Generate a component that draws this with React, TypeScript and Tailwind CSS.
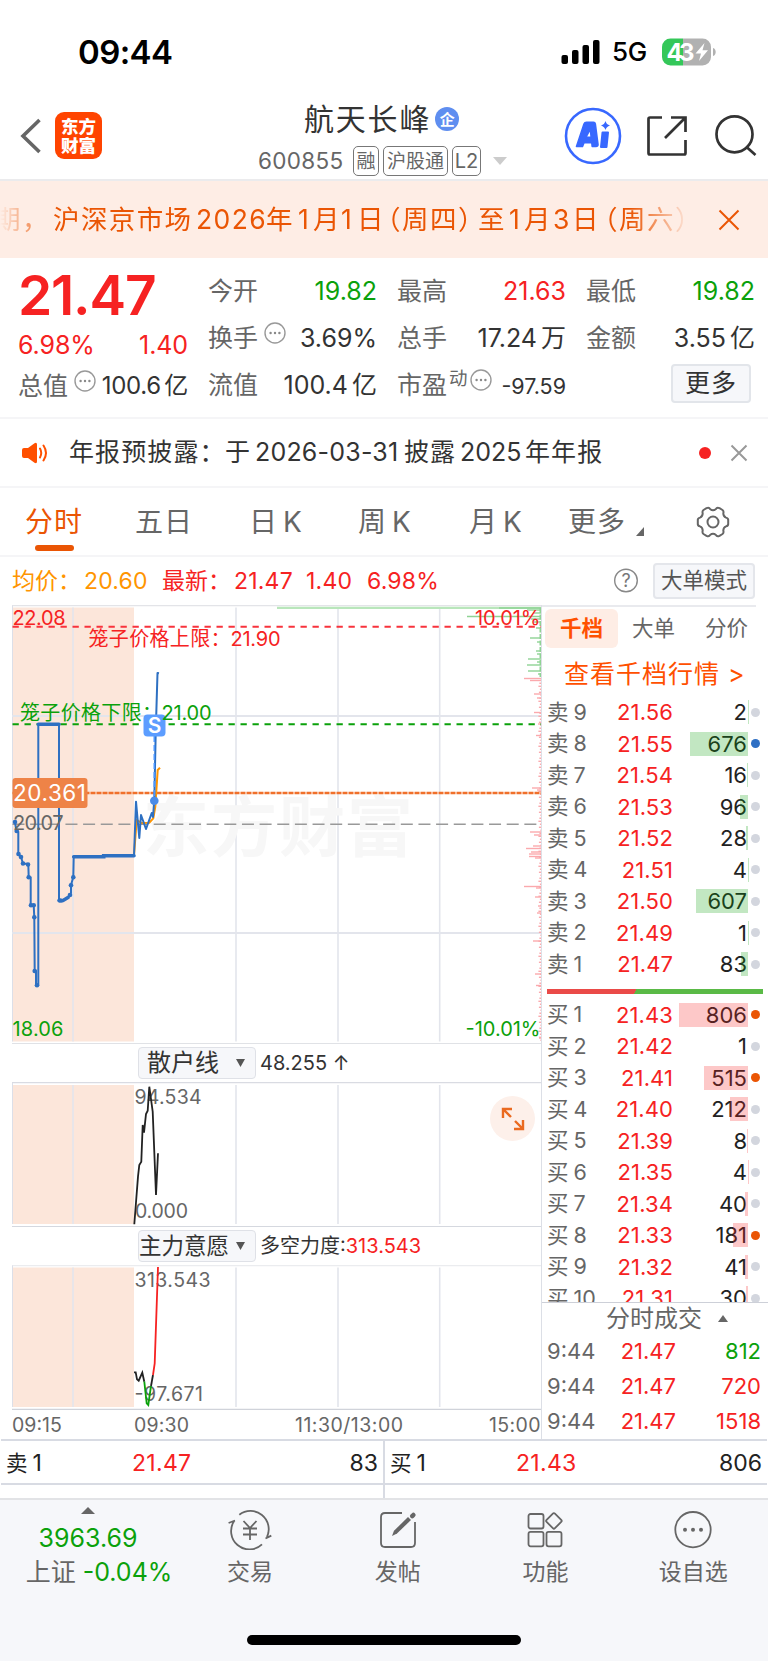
import type { ReactNode } from 'react';

type Level = { label: string; price: string; qty: string; bar: number; dot?: string };

const BANNER = [
  { t: '期，', w: 'w-[59px]' },
  { t: '沪深京市场', w: 'w-[143px]' },
  { t: '2026', w: 'w-[70px]' },
  { t: '年', w: 'w-[32px]' },
  { t: '1', w: 'w-[15px]' },
  { t: '月', w: 'w-[28px]' },
  { t: '1', w: 'w-[16px]' },
  { t: '日', w: 'w-[26px]' },
  { t: '（', w: 'w-[19px] justify-end' },
  { t: '周四', w: 'w-[56px]' },
  { t: '）', w: 'w-[20px]' },
  { t: '至', w: 'w-[31px]' },
  { t: '1', w: 'w-[15px]' },
  { t: '月', w: 'w-[29px]' },
  { t: '3', w: 'w-[19px]' },
  { t: '日', w: 'w-[27px]' },
  { t: '（', w: 'w-[20px] justify-end' },
  { t: '周六', w: 'w-[56px]' },
  { t: '）', w: 'w-[20px]' },
];

const ASKS: Level[] = [
  { label: '卖9', price: '21.56', qty: '2', bar: 0.5 },
  { label: '卖8', price: '21.55', qty: '676', bar: 58, dot: 'bg-[#2e6fc4]' },
  { label: '卖7', price: '21.54', qty: '16', bar: 1 },
  { label: '卖6', price: '21.53', qty: '96', bar: 8 },
  { label: '卖5', price: '21.52', qty: '28', bar: 2 },
  { label: '卖4', price: '21.51', qty: '4', bar: 0.5 },
  { label: '卖3', price: '21.50', qty: '607', bar: 52 },
  { label: '卖2', price: '21.49', qty: '1', bar: 0.3 },
  { label: '卖1', price: '21.47', qty: '83', bar: 7 },
];

const BIDS: Level[] = [
  { label: '买1', price: '21.43', qty: '806', bar: 69, dot: 'bg-[#ea5504]' },
  { label: '买2', price: '21.42', qty: '1', bar: 0 },
  { label: '买3', price: '21.41', qty: '515', bar: 44, dot: 'bg-[#ea5504]' },
  { label: '买4', price: '21.40', qty: '212', bar: 18 },
  { label: '买5', price: '21.39', qty: '8', bar: 0.7 },
  { label: '买6', price: '21.35', qty: '4', bar: 0.5 },
  { label: '买7', price: '21.34', qty: '40', bar: 3 },
  { label: '买8', price: '21.33', qty: '181', bar: 15, dot: 'bg-[#ea5504]' },
  { label: '买9', price: '21.32', qty: '41', bar: 3 },
  { label: '买10', price: '21.31', qty: '30', bar: 2 },
];

const TRADES = [
  { qty: '812', color: 'text-[#0ba10b]' },
  { qty: '720', color: 'text-[#f62222]' },
  { qty: '1518', color: 'text-[#f62222]' },
];

// [y, length] of the longest price-distribution bars
const SELL_BARS = [
  [608, 42], [610, 14], [613, 8], [616.5, 74], [619, 10], [622, 7], [628, 5], [638, 11], [642, 4],
  [651, 5], [654, 4], [659, 13], [662, 4], [665, 14], [671, 13], [674, 3],
];
const BUY_BARS = [
  [678.5, 17], [680.5, 11], [694, 7], [698, 4], [712.5, 7], [724, 3], [735.5, 5], [788, 9], [790, 4],
  [832, 11], [835, 7], [846, 8], [848.5, 15], [852, 10], [854, 12], [856.5, 12], [858, 6], [886.5, 17],
  [888, 5], [897, 6], [906, 3], [913, 4], [941, 8], [974, 6], [985.5, 5], [1038, 2],
];
const TICKS = Array.from({ length: 121 }, (_, i) => [680.3 + i * 3, 0.6 + ((i * 7) % 5) * 0.5]);

const PRICE_DOTS = [
  [15, 822], [16.7, 831], [18.5, 854], [21, 857], [23, 863.5], [28, 864.5], [28.7, 877.3], [31, 905.3],
  [33.7, 905.3], [34.3, 917.3], [34.7, 971], [37, 985.3], [60, 900.5], [70, 895], [71, 885.3], [73.3, 877.3],
];

const GRID_X = [73, 236, 338, 439.7];

function Dots({ size }: { size: number }) {
  return (
    <svg width={size} height={size} viewBox="0 0 22 22" className="shrink-0">
      <circle cx="11" cy="11" r="10" fill="none" stroke="#999" strokeWidth="1.4" />
      <circle cx="6.6" cy="11" r="1.2" fill="#888" />
      <circle cx="11" cy="11" r="1.2" fill="#888" />
      <circle cx="15.4" cy="11" r="1.2" fill="#888" />
    </svg>
  );
}

function Cell({ label, value, color = 'text-[#333]', extra }: {
  label: string; value: string; color?: string; extra?: ReactNode;
}) {
  return (
    <div className="flex h-[47px] items-center justify-between whitespace-nowrap">
      <span className="flex items-center text-[25px] text-[#666]">{label}{extra}</span>
      <span className={`text-[25px] [word-spacing:-3px] ${color}`}>{value}</span>
    </div>
  );
}

function Label({ x, y, w, size = 20, fill, children }: {
  x: number; y: number; w: number; size?: number; fill: string; children: string;
}) {
  return (
    <text x={x} y={y} fontSize={size} fill={fill} textLength={w} lengthAdjust="spacing">{children}</text>
  );
}

function StatusBar() {
  return (
    <div className="flex h-[93px] items-center pl-[78px] pt-[11px]">
      <span className="w-[483px] text-[33px] font-semibold tracking-[-0.6px] text-black">09:44</span>
      <svg width="40" height="26" viewBox="0 0 40 26">
        <rect x="0.5" y="16" width="6.5" height="9" rx="2" />
        <rect x="11" y="11" width="6.5" height="14" rx="2" />
        <rect x="21.5" y="6" width="6.5" height="19" rx="2" />
        <rect x="32" y="1" width="6.5" height="24" rx="2" />
      </svg>
      <span className="ml-[11px] w-[50px] text-[26px] font-medium tracking-[-0.2px] text-black">5G</span>
      <svg width="55" height="28" viewBox="0 0 55 28">
        <path d="M8.5 0.5H21V27.5H8.5A8.5 8.5 0 0 1 0 19V9A8.5 8.5 0 0 1 8.5 .5Z" fill="#34c759" />
        <path d="M21 .5H40.5A8.5 8.5 0 0 1 49 9V19A8.5 8.5 0 0 1 40.5 27.5H21Z" fill="#b1b1b1" />
        <path d="M51 10C54.6 11 54.6 17 51 18Z" fill="#b1b1b1" />
        <text x="4.5" y="22.5" fontSize="24" fontWeight="700" fill="#fff" textLength="28">43</text>
        <path d="M42.5 5L33.5 15.5H39L37 23L46 12.3H40.5Z" fill="#fff" />
      </svg>
    </div>
  );
}

function Header() {
  return (
    <div className="flex h-[88px] items-start border-b-2 border-[#ebebed]">
      <svg width="24" height="36" viewBox="0 0 24 36" className="ml-[19px] mt-[25px]">
        <path d="M20.5 2L4 18L20.5 34" fill="none" stroke="#666" strokeWidth="3.6" />
      </svg>
      <div className="ml-3 mt-[19px] flex h-[47px] w-[47px] flex-col items-center justify-center rounded-[9px] bg-[#ff4400] text-[17.5px] font-black leading-[19px] text-white">
        <span>东方</span>
        <span>财富</span>
      </div>
      <div className="ml-[156px] w-[281px]">
        <div className="flex h-[52px] items-center pl-[46px] text-[30px] tracking-[1.8px] text-[#333]">
          航天长峰
          <span className="ml-[4px] flex h-6 w-6 items-center justify-center rounded-full bg-[#5f8ef0] text-[15px] font-bold tracking-normal text-white">企</span>
        </div>
        <div className="flex h-[32px] items-center gap-1 text-[19px] leading-none text-[#666]">
          <span className="w-[91px] text-[22.5px] tracking-[0.3px]">600855</span>
          <span className="flex h-[30px] w-[26px] items-center justify-center rounded-[5px] border border-[#777]">融</span>
          <span className="flex h-[30px] w-[65px] items-center justify-center rounded-[5px] border border-[#777]">沪股通</span>
          <span className="flex h-[30px] w-[29px] items-center justify-center rounded-[5px] border border-[#777] text-[20px]">L2</span>
          <svg width="14" height="8" viewBox="0 0 14 8" className="ml-2">
            <path d="M0 0H14L7 8Z" fill="#ccc" />
          </svg>
        </div>
      </div>
      <svg width="58" height="58" viewBox="0 0 58 58" className="ml-[25px] mt-[14px]">
        <circle cx="29" cy="29" r="27" fill="none" stroke="#3868ff" strokeWidth="2.6" />
        <path d="M12.5 39.5L20 17Q20.6 15.2 22.5 15.2H29.5Q31 15.2 31.3 16.8L34 37.5Q34 39.5 32 39.5H28.2L27.8 35.8H20L18.5 39.5Z M21.8 30.4H27.2L26.3 22Z" fill="#3868ff" fillRule="evenodd" stroke="#3868ff" strokeWidth="1.6" strokeLinejoin="round" />
        <path d="M38.5 25.5H44L42.5 40H37Z" fill="#3868ff" stroke="#3868ff" strokeWidth="2" strokeLinejoin="round" />
        <path d="M41.5 14Q42.3 17.5 46 18.5Q42.3 19.5 41.5 23Q40.5 19.5 37 18.5Q40.5 17.5 41.5 14Z" fill="#3868ff" />
      </svg>
      <svg width="42" height="42" viewBox="0 0 42 42" className="ml-[24px] mt-[22px]" fill="none" stroke="#333" strokeWidth="2.7">
        <path d="M16 2.5H4Q2.5 2.5 2.5 4V38Q2.5 39.5 4 39.5H38Q39.5 39.5 39.5 38V25" />
        <path d="M25 2.5H39.5V17M39.5 2.5L19 23" />
      </svg>
      <svg width="44" height="44" viewBox="0 0 44 44" className="ml-[26px] mt-[20px] shrink-0" fill="none" stroke="#333" strokeWidth="2.7">
        <circle cx="20.5" cy="21.3" r="18" />
        <path d="M32 33.5L41.5 42" />
      </svg>
    </div>
  );
}

function Banner() {
  return (
    <div className="flex h-[77px] items-center bg-[#feede5] text-[#ea5504]">
      <div className="flex h-[60px] w-[700px] items-center overflow-hidden [mask-image:linear-gradient(to_right,transparent,black_54px,black_630px,transparent_690px)]">
        <div className="-ml-[6px] flex">
          {BANNER.map((s, i) => (
            <span key={i} className={`flex shrink-0 whitespace-nowrap text-[26.5px] tracking-[1.4px] ${s.w}`}>{s.t}</span>
          ))}
        </div>
      </div>
      <svg width="22" height="22" viewBox="0 0 22 22" className="ml-[18px]">
        <path d="M1.5 1.5L20.5 20.5M20.5 1.5L1.5 20.5" stroke="#ea5504" strokeWidth="2" />
      </svg>
    </div>
  );
}

function Quote() {
  return (
    <div className="flex h-[161px] gap-5 border-b-2 border-[#f5f5f7] pl-[18px] pr-[13px] pt-[10px]">
      <div className="w-[170px]">
        <div className="flex h-[54px] items-center text-[55px] font-semibold tracking-[-1.2px] text-[#f62222]">21.47</div>
        <div className="flex h-[47px] items-center justify-between text-[25px] tracking-[-0.1px] text-[#f62222]">
          <span>6.98%</span>
          <span>1.40</span>
        </div>
        <div className="flex h-[34px] items-center whitespace-nowrap text-[25px] text-[#666]">
          总值
          <span className="mb-[11px] ml-[6px] flex"><Dots size={22} /></span>
          <span className="ml-auto text-[24px] tracking-[-0.3px] text-[#333] [word-spacing:-3px]">100.6 亿</span>
        </div>
      </div>
      <div className="w-[169px]">
        <Cell label="今开" value="19.82" color="text-[#0ba10b]" />
        <Cell label="换手" value="3.69%" extra={<span className="mb-[11px] ml-[6px] flex"><Dots size={22} /></span>} />
        <Cell label="流值" value="100.4 亿" />
      </div>
      <div className="w-[169px]">
        <Cell label="最高" value="21.63" color="text-[#f62222]" />
        <Cell label="总手" value="17.24 万" />
        <div className="flex h-[47px] items-center whitespace-nowrap text-[25px] text-[#666]">
          市盈
          <span className="mb-[14px] ml-[2px] text-[18.5px]">动</span>
          <span className="mb-[11px] ml-[2px] flex"><Dots size={22} /></span>
          <span className="ml-auto mt-[3px] text-[21.5px] text-[#333]">-97.59</span>
        </div>
      </div>
      <div className="w-[169px]">
        <Cell label="最低" value="19.82" color="text-[#0ba10b]" />
        <Cell label="金额" value="3.55 亿" />
        <div className="mr-1 mt-[2px] flex justify-end">
          <button className="h-[39px] w-[80px] rounded-[4px] border-2 border-[#e2e5ea] bg-[#f6f7fa] text-[25px] leading-none tracking-[1px] text-[#333]">更多</button>
        </div>
      </div>
    </div>
  );
}

function Notice() {
  return (
    <div className="flex h-[69px] items-center border-b-2 border-[#f5f5f7] pl-[22px]">
      <svg width="26" height="22" viewBox="0 0 26 22">
        <path d="M2 6H6L12.5 1.2Q15 0 15 2.5V19.5Q15 22 12.5 20.8L6 16H2Q0 16 0 14V8Q0 6 2 6Z" fill="#ff5000" />
        <path d="M18 6.5Q20.5 11 18 15.5M21.5 3.5Q26.5 11 21.5 18.5" fill="none" stroke="#ff5000" strokeWidth="2" strokeLinecap="round" />
      </svg>
      <div className="ml-[21px] flex w-[630px] whitespace-nowrap text-[25px] tracking-[1.1px] text-[#333]">
        <span className="w-[156px]">年报预披露：</span>
        <span className="w-[30px]">于</span>
        <span className="w-[149px] tracking-[0.2px]">2026-03-31</span>
        <span className="w-[56px]">披露</span>
        <span className="w-[65px] tracking-normal">2025</span>
        <span>年年报</span>
      </div>
      <span className="h-3 w-3 rounded-full bg-[#f62222]" />
      <svg width="18" height="18" viewBox="0 0 18 18" className="ml-[19px]">
        <path d="M1.5 1.5L16.5 16.5M16.5 1.5L1.5 16.5" stroke="#999" strokeWidth="2" />
      </svg>
    </div>
  );
}

function Tabs() {
  return (
    <div className="relative flex h-[69px] items-center whitespace-nowrap border-b-2 border-[#f5f5f7] pl-[25px] text-[28px] tracking-[1px] text-[#666] [word-spacing:-4px]">
      <span className="w-[110px] text-[#ea5504]">分时</span>
      <span className="w-[114px]">五日</span>
      <span className="w-[109px]">日 K</span>
      <span className="w-[111px]">周 K</span>
      <span className="w-[99px]">月 K</span>
      <span className="w-[68px]">更多</span>
      <svg width="8" height="9" viewBox="0 0 8 9" className="mt-5"><path d="M8 0V9H0Z" fill="#666" /></svg>
      <svg width="34" height="32" viewBox="0 0 34 32" className="ml-[52px]" fill="none" stroke="#666" strokeWidth="2" strokeLinejoin="round">
        <circle cx="17" cy="16" r="5.5" />
        <path d="M10.5 2.2Q13 1 14.3 3.2Q17 5.3 19.7 3.2Q21 1 23.5 2.2L26.5 4Q28 5.2 27.3 7.3Q27.3 10.6 30 11.6Q32.3 12.2 32.2 14V18Q32.3 19.8 30 20.4Q27.3 21.4 27.3 24.7Q28 26.8 26.5 28L23.5 29.8Q21 31 19.7 28.8Q17 26.7 14.3 28.8Q13 31 10.5 29.8L7.5 28Q6 26.8 6.7 24.7Q6.7 21.4 4 20.4Q1.7 19.8 1.8 18V14Q1.7 12.2 4 11.6Q6.7 10.6 6.7 7.3Q6 5.2 7.5 4Z" />
      </svg>
      <span className="absolute bottom-[4px] left-[35px] h-[6px] w-[39px] rounded-full bg-[#ea5504]" />
    </div>
  );
}

function PriceLine() {
  return (
    <div className="flex h-[48px] items-center whitespace-nowrap pl-[12px] text-[23px] text-[#f62222]">
      <span className="w-[72px] text-[#ff9500]">均价：</span>
      <span className="w-[78px] tracking-[0.2px] text-[#ff9500]">20.60</span>
      <span className="w-[72px]">最新：</span>
      <span className="w-[72px] tracking-[0.2px]">21.47</span>
      <span className="w-[61px] tracking-[0.2px]">1.40</span>
      <span className="w-[246px] tracking-[0.2px]">6.98%</span>
      <svg width="26" height="26" viewBox="0 0 26 26">
        <circle cx="13" cy="12.5" r="11.3" fill="none" stroke="#888" strokeWidth="1.4" />
        <text x="13" y="18.8" fontSize="18" textAnchor="middle" fill="#777">?</text>
      </svg>
      <span className="ml-[14px] flex h-[36px] w-[102px] items-center justify-center rounded-[4px] border-2 border-[#e4e6eb] bg-[#f6f7fa] text-[21.5px] text-[#555]">大单模式</span>
    </div>
  );
}

function Grid({ top, bottom }: { top: number; bottom: number }) {
  return (
    <>
      <rect x="12.5" y={top} width="121.5" height={bottom - top} fill="#fce6da" />
      {GRID_X.map((x) => (
        <line key={x} x1={x} x2={x} y1={top} y2={bottom} stroke="#e3e5ec" strokeWidth="1.6" />
      ))}
      <line x1="12.5" x2="12.5" y1={top - 2} y2={bottom} stroke="#dcdfe8" />
    </>
  );
}

function MainChart() {
  return (
    <svg width="541" height="439" viewBox="0 605 541 439" className="block">
      <line x1="12" x2="541" y1="605.5" y2="605.5" stroke="#e3e4e8" strokeWidth="1.5" />
      <Grid top={607.5} bottom={1041.5} />
      <line x1="12" x2="541" y1="716" y2="716" stroke="#e3e5ec" strokeWidth="2" />
      <line x1="12" x2="541" y1="933" y2="933" stroke="#e3e5ec" strokeWidth="2" />
      <text x="143" y="851" fontSize="66" fontWeight="700" fill="#f7f7f7" textLength="270">东方财富</text>
      <line x1="277" x2="541" y1="607.8" y2="607.8" stroke="#b9e6bb" strokeWidth="2.2" />
      {SELL_BARS.map(([y, w]) => <line key={y} x1={541 - w} x2="541" y1={y} y2={y} stroke="#8fd394" strokeWidth="1.4" />)}
      <path d="M540.3 608V677" stroke="#8fd394" strokeWidth="1.6" strokeDasharray="5 1.5" />
      {BUY_BARS.map(([y, w]) => <line key={y} x1={541 - w} x2="541" y1={y} y2={y} stroke="#fba9ad" strokeWidth="1.4" />)}
      {TICKS.map(([y, w]) => <line key={y} x1={541 - w} x2="541" y1={y} y2={y} stroke="#fba9ad" strokeWidth="1.4" />)}

      <line x1="12.5" x2="541" y1="626.7" y2="626.7" stroke="#f8333c" strokeWidth="2" strokeDasharray="6.3 5.7" />
      <line x1="12.5" x2="541" y1="724.2" y2="724.2" stroke="#0ba10b" strokeWidth="2" strokeDasharray="6.3 5.7" />
      <line x1="12.5" x2="541" y1="793" y2="793" stroke="#f0702b" strokeWidth="2.4" strokeDasharray="5 1" />
      <line x1="12.5" x2="541" y1="824.3" y2="824.3" stroke="#999" strokeWidth="1.6" strokeDasharray="12 5.65" />

      <path d="M134 855.7L136.7 820L141.7 823L149.3 822.7L153.3 818.3L155.3 806.7L157.7 770L160 767.7" fill="none" stroke="#ff9500" strokeWidth="2" />
      <path d="M15 822.7L16.7 831.7H18.3V854L21 857L23 863.5L28.3 864L28.7 877.3H30.7V905.3H33.7L34.3 917.3L34.7 971H36V985.3H38.3V724.3H59V900L62 901.5L68 897L71 893V885L73.3 877L73.7 856.7H103.7V855.7H134L136 801.7L139.3 838L141 815L146 829L151.7 813L153 817L154.3 800L155.7 733L157.5 673L159 673.3" fill="none" stroke="#2e70c2" strokeWidth="2" strokeLinejoin="round" />
      <path d="M38.3 724.3H59M73.7 856.7H103.7V855.7H134M59 900.5H63L68 897.5" fill="none" stroke="#2e70c2" strokeWidth="3.6" strokeLinecap="round" />
      {PRICE_DOTS.map(([x, y]) => <circle key={`${x}-${y}`} cx={x} cy={y} r="2.3" fill="#2e70c2" />)}

      <path d="M154.3 736V798" stroke="#4a95ff" strokeWidth="1.6" strokeDasharray="6 3" />
      <circle cx="154.3" cy="800.7" r="4.3" fill="#4a8be8" />

      <Label x={12.5} y={624.5} w={53} fill="#f62222">22.08</Label>
      <Label x={475} y={624.5} w={65.5} fill="#f62222">10.01%</Label>
      <Label x={88.5} y={645.7} w={142} fill="#f62222">笼子价格上限：</Label>
      <Label x={230.5} y={645.7} w={50} fill="#f62222">21.90</Label>
      <Label x={20} y={719.7} w={142} fill="#0ba10b">笼子价格下限：</Label>
      <rect x="143.5" y="714.5" width="22" height="22" rx="4" fill="#5c9dff" />
      <text x="154.5" y="733" fontSize="21" fontWeight="600" fill="#fff" textAnchor="middle">S</text>
      <Label x={161.5} y={719.7} w={50} fill="#0ba10b">21.00</Label>
      <rect x="12.5" y="778" width="75" height="30" rx="3" fill="#ee8347" />
      <Label x={13} y={801} w={73} size={22.5} fill="#fff">20.361</Label>
      <Label x={13} y={830} w={50.5} fill="#666">20.07</Label>
      <Label x={12.5} y={1036} w={51} fill="#0ba10b">18.06</Label>
      <Label x={465.5} y={1036} w={75} fill="#0ba10b">-10.01%</Label>
      <line x1="12" x2="541" y1="1043.5" y2="1043.5" stroke="#e0e2e6" />
    </svg>
  );
}

function IndicatorBar({ name, children }: { name: string; children: ReactNode }) {
  return (
    <div className="flex h-[38px] items-center whitespace-nowrap pl-[138px] text-[20px] text-[#333]">
      <div className="flex h-[32px] w-[118px] items-center justify-between rounded-[4px] border border-[#dfe1e7] bg-[#f6f7fa] pr-[10px] text-[22.5px]">
        <span className={name.length > 3 ? '' : 'pl-[8px] text-[24px]'}>{name}</span>
        <svg width="9" height="8" viewBox="0 0 9 8"><path d="M0 0H9L4.5 8Z" fill="#555" /></svg>
      </div>
      <span className="ml-[4px]">{children}</span>
    </div>
  );
}

function Charts() {
  return (
    <div className="w-[542px] border-r border-[#dcdfe6]">
      <MainChart />
      <IndicatorBar name="散户线">48.255 ↑</IndicatorBar>
      <div className="relative">
        <svg width="541" height="145" viewBox="0 1082 541 145" className="block">
          <line x1="12" x2="541" y1="1082.5" y2="1082.5" stroke="#d9dbe2" strokeWidth="1.5" />
          <Grid top={1085} bottom={1224} />
          <Label x={134.5} y={1104} w={67} size={19.5} fill="#666">94.534</Label>
          <Label x={135} y={1218} w={53} size={19.5} fill="#666">0.000</Label>
          <path d="M134.3 1224.3L138 1176.7L139.3 1165L141.3 1161.7L142.7 1125L144 1132.7L146 1114L147.7 1110.7L149.3 1086.7L152.7 1111.7L156 1195L158 1153.3" fill="none" stroke="#222" strokeWidth="1.8" />
          <line x1="12" x2="541" y1="1226.5" y2="1226.5" stroke="#d5d8df" />
        </svg>
        <div className="absolute left-[490px] top-[14px] flex h-[45px] w-[45px] items-center justify-center rounded-full bg-[#fdf0ea]">
          <svg width="24" height="24" viewBox="0 0 24 24" fill="none" stroke="#ea6a20" strokeWidth="2.4">
            <path d="M2 11V2H11M2 2L10 10M22 13V22H13M22 22L14 14" />
          </svg>
        </div>
      </div>
      <IndicatorBar name="主力意愿">多空力度:<span className="text-[#f62222]">313.543</span></IndicatorBar>
      <svg width="541" height="145" viewBox="0 1265 541 145" className="block">
        <line x1="12" x2="541" y1="1265.5" y2="1265.5" stroke="#ebecef" strokeWidth="1.5" />
        <Grid top={1267.5} bottom={1407} />
        <Label x={134.5} y={1287} w={76} size={19.5} fill="#666">313.543</Label>
        <Label x={134.5} y={1400.5} w={68.5} size={19.5} fill="#666">-97.671</Label>
        <g fill="none" strokeWidth="1.8">
          <path d="M134 1372.3H135.7L137 1379.3L138.7 1380.7L142.3 1372.7L144.3 1381.7" stroke="#222" />
          <path d="M144.3 1381.7L146.7 1403.3L148.3 1405L151 1386" stroke="#0ba10b" />
          <path d="M151 1386L153 1375" stroke="#222" />
          <path d="M153 1375L154.7 1363.3L158 1267" stroke="#f62222" />
        </g>
        <line x1="12" x2="541" y1="1409.3" y2="1409.3" stroke="#d0d3da" strokeWidth="1.2" />
      </svg>
      <div className="flex h-[29px] items-center pl-[12px] pt-[3px] text-[19.5px] text-[#666]">
        <span className="w-[122px]">09:15</span>
        <span className="w-[161px] tracking-[0.2px]">09:30</span>
        <span className="tracking-[0.5px]">11:30/13:00</span>
        <span className="ml-auto tracking-[0.4px]">15:00</span>
      </div>
    </div>
  );
}

function DepthRow({ row, barColor }: { row: Level; barColor: string }) {
  return (
    <div className="flex h-[31.5px] shrink-0 items-center whitespace-nowrap pl-[5px] text-[22px]">
      <span className="w-[62px] shrink-0 text-[21.5px] text-[#666]">{row.label[0]}<span className="ml-[5px]">{row.label.slice(1)}</span></span>
      <span className="w-[64px] text-right tracking-[0.1px] text-[#f62222]">{row.price}</span>
      <span className="relative flex h-[24px] w-[75px] shrink-0 items-center justify-end pr-px text-[#222]">
        {row.qty}
        <span className={`absolute right-0 top-0 h-full ${barColor}`} style={{ width: row.bar }} />
      </span>
      <span className={`ml-[3px] h-[9px] w-[9px] shrink-0 rounded-full ${row.dot ?? 'bg-[#d3d6de]'}`} />
    </div>
  );
}

function Depth() {
  return (
    <div className="flex w-[226px] flex-col">
      <div className="mr-[12px] h-[4px] shrink-0 border-t-2 border-[#e9eaee]" />
      <div className="flex h-[39px] shrink-0 items-center text-[21.5px] text-[#666]">
        <span className="ml-[3px] flex h-full w-[73px] items-center justify-center rounded-md bg-[#feede5] font-bold text-[#ff5000]">千档</span>
        <span className="ml-[14px]">大单</span>
        <span className="ml-[30px]">分价</span>
      </div>
      <div className="flex h-[48.5px] shrink-0 items-center whitespace-nowrap pl-[22px] pt-[4px] text-[25px] tracking-[1px] text-[#ff5000]">查看千档行情<span className="ml-2">&gt;</span></div>
      {ASKS.map((r) => <DepthRow key={r.label} row={r} barColor="bg-[#0ba10b]/25" />)}
      <div className="ml-[5px] mr-[5px] mt-[8.5px] h-[5px] shrink-0 bg-[linear-gradient(120deg,#ea4a48_41%,#5aba46_41%)]" />
      <div className="mt-[5.5px] flex h-[304px] shrink-0 flex-col overflow-hidden border-b border-[#cdd0d8]">
        {BIDS.map((r) => <DepthRow key={r.label} row={r} barColor="bg-[#f62222]/25" />)}
      </div>
      <div className="flex h-[31px] shrink-0 items-center pl-[64px] text-[24px] text-[#666]">
        分时成交
        <svg width="10" height="7" viewBox="0 0 10 7" className="ml-4"><path d="M5 0L10 7H0Z" fill="#666" /></svg>
      </div>
      {TRADES.map((t) => (
        <div key={t.qty} className="flex h-[34.7px] shrink-0 items-center pl-[5px] pr-[7px] text-[22px] text-[#666]">
          <span className="w-[64px]">9:44</span>
          <span className="w-[65px] text-right text-[#f62222]">21.47</span>
          <span className={`ml-auto ${t.color}`}>{t.qty}</span>
        </div>
      ))}
    </div>
  );
}

function BestLevel({ label, price, qty }: { label: string; price: string; qty: string }) {
  return (
    <div className="flex h-[46px] flex-1 items-center border-y-2 border-[#d8dbe3] px-[5px] pt-[3px] text-[23px] text-[#222]">
      <span className="w-[126px] text-[21.5px]">{label[0]}<span className="ml-[5px] text-[23px]">{label[1]}</span></span>
      <span className="tracking-[0.3px] text-[#f62222]">{price}</span>
      <span className="ml-auto">{qty}</span>
    </div>
  );
}

function NavItem({ label, children }: { label: string; children: ReactNode }) {
  return (
    <div className="flex w-[147.75px] flex-col items-center pt-[10px]">
      <svg width="44" height="40" viewBox="0 0 44 40" fill="none" stroke="#666" strokeWidth="1.8">{children}</svg>
      <span className="mt-[9px] whitespace-nowrap leading-[26px]">{label}</span>
    </div>
  );
}

function BottomNav() {
  return (
    <div className="h-[163px] border-t-2 border-[#e2e3e6] bg-[#f6f7fa]">
      <div className="flex text-[23px] leading-none text-[#666]">
        <div className="flex w-[176px] flex-col items-center">
          <svg width="14" height="7" viewBox="0 0 14 7" className="mt-[7px]"><path d="M7 0L14 7H0Z" fill="#666" /></svg>
          <span className="mt-[9px] h-[30px] text-[25px] leading-[30px] text-[#0ba10b]">3963.69</span>
          <span className="mt-[4px] flex h-[30px] items-center gap-[7px] whitespace-nowrap pl-[22px] text-[25px]">上证<span className="text-[#0ba10b]">-0.04%</span></span>
        </div>
        <NavItem label="交易">
          <path d="M11.3 4.7A18.3 18.3 0 0 1 39 27M43.3 25.6L37.5 28.5M39 27.5L40.3 23" />
          <path d="M6.3 10.8A18.3 18.3 0 0 0 34 34.4M.6 13L7 10.5" />
          <path d="M15.5 11L22 18L28.5 11M22 18V30M15 18.5H29M15 24.5H29" />
        </NavItem>
        <NavItem label="发帖">
          <path d="M26 3H9Q5 3 5 7V33Q5 37 9 37H35Q39 37 39 33V12" />
          <path d="M16 26L18 20.8L32 7L35 10L21 23.5Z" fill="#666" stroke="none" />
          <path d="M36.2 6.2L37.4 5" strokeWidth="4.5" strokeLinecap="round" />
        </NavItem>
        <NavItem label="功能">
          <rect x="5.5" y="4" width="15" height="14.5" rx="2" />
          <rect x="5.5" y="21.8" width="15" height="14.5" rx="2" />
          <rect x="23.5" y="21.8" width="15" height="14.5" rx="2" />
          <rect x="25" y="5" width="11.8" height="11.8" rx="1.5" transform="rotate(45 30.9 10.9)" />
        </NavItem>
        <NavItem label="设自选">
          <circle cx="22" cy="19.7" r="17.7" />
          <g fill="#666" stroke="none">
            <circle cx="14" cy="19.7" r="2" />
            <circle cx="22" cy="19.7" r="2" />
            <circle cx="30" cy="19.7" r="2" />
          </g>
        </NavItem>
      </div>
      <div className="mx-auto mt-[48px] h-[10px] w-[274px] rounded-full bg-black" />
    </div>
  );
}

export default function App() {
  return (
    <div className="h-[1663px] w-[768px] overflow-hidden bg-white font-['Inter','Noto_Sans_CJK_SC',sans-serif] leading-none">
      <StatusBar />
      <Header />
      <Banner />
      <Quote />
      <Notice />
      <Tabs />
      <PriceLine />
      <div className="flex h-[834px]">
        <Charts />
        <Depth />
      </div>
      <div className="flex h-[59px] px-px">
        <BestLevel label="卖1" price="21.47" qty="83" />
        <div className="w-[2px] bg-[#d8dbe3]" />
        <BestLevel label="买1" price="21.43" qty="806" />
      </div>
      <BottomNav />
    </div>
  );
}
